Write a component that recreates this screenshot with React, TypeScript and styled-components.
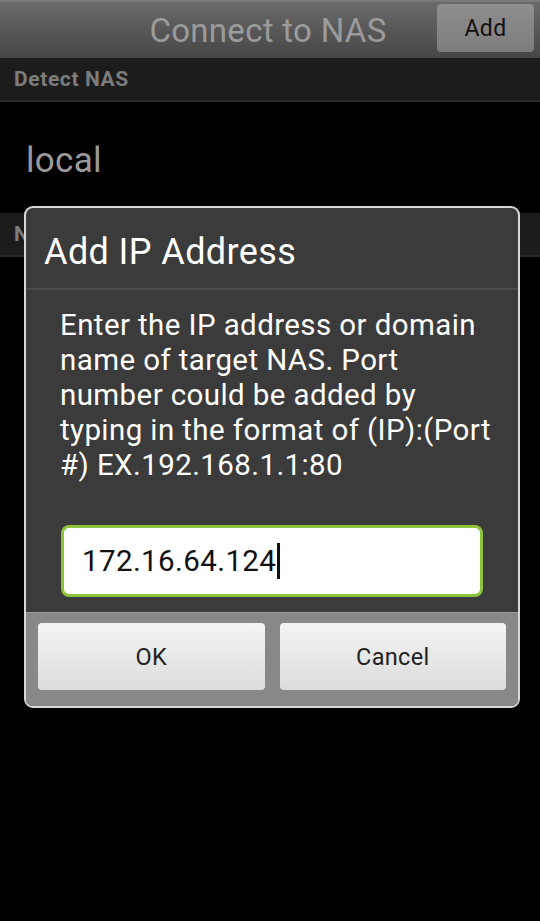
import React from "react";
import styled, { createGlobalStyle } from "styled-components";

const GlobalStyle = createGlobalStyle`
  html, body {
    margin: 0;
    padding: 0;
    background: #000;
    font-family: Roboto, "Noto Sans", sans-serif;
  }
`;

const Screen = styled.div`
  position: relative;
  width: 540px;
  height: 921px;
  background: #000;
  overflow: hidden;
`;

const TitleBar = styled.header`
  position: relative;
  height: 58px;
  display: flex;
  align-items: center;
  justify-content: center;
  background: linear-gradient(#6a6a6a, #464646);
  border-top: 2px solid #7a7a7a;
  box-sizing: border-box;
`;

const Title = styled.h1`
  margin: 0 0 0 -4px;
  font-size: 33px;
  font-weight: 400;
  letter-spacing: 0.3px;
  color: #9b9b9b;
`;

const AddButton = styled.button`
  position: absolute;
  right: 6px;
  top: 2px;
  width: 97px;
  height: 48px;
  border: none;
  border-radius: 4px;
  background: linear-gradient(#8e8e8e, #7d7d7d);
  color: #111;
  font-family: Roboto, sans-serif;
  font-size: 23px;
  letter-spacing: 0.3px;
  padding: 0;
`;

const SectionHeader = styled.div`
  height: 42px;
  display: flex;
  align-items: center;
  padding-left: 14px;
  background: #1c1c1c;
  border-bottom: 2px solid #2a2a2a;
  color: #7c7c7c;
  font-size: 21px;
  letter-spacing: 0.6px;
  font-weight: 700;
`;

const ListRow = styled.div`
  height: 111px;
  box-sizing: border-box;
  padding: 5px 0 0 26px;
  display: flex;
  align-items: center;
  color: #9b9b9b;
  font-size: 35px;
  letter-spacing: 0.3px;
`;

const Dialog = styled.div`
  position: absolute;
  left: 24px;
  top: 206px;
  width: 496px;
  height: 502px;
  box-sizing: border-box;
  border: 2px solid #d8d8d8;
  border-radius: 9px;
  background: #3b3b3b;
  overflow: hidden;
  display: flex;
  flex-direction: column;
`;

const DialogTitle = styled.div`
  height: 82px;
  display: flex;
  align-items: center;
  padding-left: 18px;
  padding-top: 7px;
  box-sizing: border-box;
  color: #fff;
  font-size: 36px;
  letter-spacing: 0.4px;
  border-bottom: 2px solid #4c4c4c;
`;

const DialogBody = styled.div`
  flex: 1;
  padding: 18px 20px 0 34px;
  color: #fff;
  font-size: 29.5px;
  letter-spacing: 0.4px;
  line-height: 35px;
`;

const Message = styled.p`
  margin: 0 0 42px;
`;

const InputBox = styled.div`
  width: 422px;
  height: 72px;
  margin-left: 1px;
  box-sizing: border-box;
  border: 3px solid #8dc33a;
  border-radius: 8px;
  background: #fff;
  display: flex;
  align-items: center;
  padding-left: 18px;
  color: #111;
  font-size: 29.5px;
`;

const Caret = styled.span`
  display: inline-block;
  width: 3px;
  height: 36px;
  margin-left: 1px;
  background: #111;
`;

const ButtonBar = styled.div`
  height: 94px;
  box-sizing: border-box;
  padding: 10px 12px 16px;
  display: flex;
  gap: 15px;
  background: #888;
  border-top: 1px solid #9a9a9a;
`;

const DialogButton = styled.button`
  flex: 1;
  border: none;
  border-radius: 4px;
  background: linear-gradient(#f4f4f4, #dcdcdc);
  color: #222;
  font-family: Roboto, sans-serif;
  font-size: 23.5px;
  letter-spacing: 0.3px;
  padding: 0;
`;

export default function App() {
  return (
    <Screen>
      <GlobalStyle />
      <TitleBar>
        <Title>Connect to NAS</Title>
        <AddButton>Add</AddButton>
      </TitleBar>
      <SectionHeader>Detect NAS</SectionHeader>
      <ListRow>local</ListRow>
      <SectionHeader>NAS List</SectionHeader>

      <Dialog>
        <DialogTitle>Add IP Address</DialogTitle>
        <DialogBody>
          <Message>
            Enter the IP address or domain name of target NAS. Port number could be added by
            typing in the format of (IP):(Port #) EX.192.168.1.1:80
          </Message>
          <InputBox>
            172.16.64.124
            <Caret />
          </InputBox>
        </DialogBody>
        <ButtonBar>
          <DialogButton>OK</DialogButton>
          <DialogButton>Cancel</DialogButton>
        </ButtonBar>
      </Dialog>
    </Screen>
  );
}
